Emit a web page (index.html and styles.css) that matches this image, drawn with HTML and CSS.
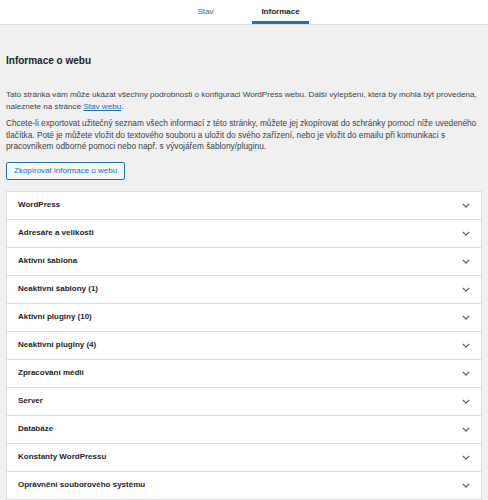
FILE: index.html
```html
<!DOCTYPE html>
<html lang="cs">
<head>
<meta charset="utf-8">
<link rel="stylesheet" href="styles.css">
</head>
<body>
<header class="tabs">
  <a class="tab">Stav</a>
  <a class="tab active">Informace</a>
</header>
<main class="content">
  <h2 class="title">Informace o webu</h2>
  <p class="text text-intro">Tato stránka vám může ukázat všechny podrobnosti o konfiguraci WordPress webu. Další vylepšení, která by mohla být provedena, naleznete na stránce <a class="link">Stav webu</a>.</p>
  <p class="text">Chcete-li exportovat užitečný seznam všech informací z této stránky, můžete jej zkopírovat do schránky pomocí níže uvedeného tlačítka. Poté je můžete vložit do textového souboru a uložit do svého zařízení, nebo je vložit do emailu při komunikaci s pracovníkem odborné pomoci nebo např. s vývojářem šablony/pluginu.</p>
  <div class="actions"><button class="btn">Zkopírovat informace o webu</button></div>
  <div class="accordion">
    <div class="row"><span>WordPress</span><svg class="chev" viewBox="0 0 10 6"><path d="M1 1l4 4 4-4"/></svg></div>
    <div class="row"><span>Adresáře a velikosti</span><svg class="chev" viewBox="0 0 10 6"><path d="M1 1l4 4 4-4"/></svg></div>
    <div class="row"><span>Aktivní šablona</span><svg class="chev" viewBox="0 0 10 6"><path d="M1 1l4 4 4-4"/></svg></div>
    <div class="row"><span>Neaktivní šablony (1)</span><svg class="chev" viewBox="0 0 10 6"><path d="M1 1l4 4 4-4"/></svg></div>
    <div class="row"><span>Aktivní pluginy (10)</span><svg class="chev" viewBox="0 0 10 6"><path d="M1 1l4 4 4-4"/></svg></div>
    <div class="row"><span>Neaktivní pluginy (4)</span><svg class="chev" viewBox="0 0 10 6"><path d="M1 1l4 4 4-4"/></svg></div>
    <div class="row"><span>Zpracování médií</span><svg class="chev" viewBox="0 0 10 6"><path d="M1 1l4 4 4-4"/></svg></div>
    <div class="row"><span>Server</span><svg class="chev" viewBox="0 0 10 6"><path d="M1 1l4 4 4-4"/></svg></div>
    <div class="row"><span>Databáze</span><svg class="chev" viewBox="0 0 10 6"><path d="M1 1l4 4 4-4"/></svg></div>
    <div class="row"><span>Konstanty WordPressu</span><svg class="chev" viewBox="0 0 10 6"><path d="M1 1l4 4 4-4"/></svg></div>
    <div class="row"><span>Oprávnění souborového systému</span><svg class="chev" viewBox="0 0 10 6"><path d="M1 1l4 4 4-4"/></svg></div>
  </div>
</main>
</body>
</html>
```
FILE: styles.css
```css
* { box-sizing: border-box; }
html, body { margin: 0; padding: 0; }
body {
  background: #f0f0f1;
  color: #1d2327;
  font-family: "Liberation Sans", Arial, sans-serif;
  font-size: 8px;
  line-height: 11.5px;
}
.tabs {
  background: #fff;
  height: 25px;
  border-bottom: 1px solid #dcdcde;
  display: flex;
  justify-content: center;
  gap: 29px;
  padding-left: 9px;
}
.tab {
  display: flex;
  align-items: center;
  height: 24px;
  padding: 2px 9.5px 0;
  font-size: 8px;
  color: #50575e;
  border-bottom: 3px solid transparent;
}
.tab.active {
  color: #1d2327;
  font-weight: 600;
  border-bottom-color: #2271b1;
}
.content {
  padding: 0 6px;
}
.title {
  margin: 0;
  padding-top: 29px;
  font-size: 10px;
  line-height: 14px;
  font-weight: 600;
  color: #1d2327;
}
.text {
  margin: 21px 0 0;
  font-size: 8.3px;
  line-height: 11.5px;
  color: #3c434a;
}
.text-intro { font-size: 8.1px; }
.text + .text { margin-top: 6px; }
.link { color: #2271b1; text-decoration: underline; }
.actions { margin-top: 9px; display: flex; }
.btn {
  font-family: inherit;
  font-size: 8px;
  color: #2271b1;
  background: #f6f7f7;
  border: 1px solid #2271b1;
  border-radius: 2px;
  height: 18px;
  padding: 0 7px;
  line-height: 16px;
  cursor: pointer;
}
.accordion {
  margin-top: 11px;
  background: #fff;
  border: 1px solid #dcdcde;
  border-bottom: 0;
}
.row {
  height: 28px;
  border-bottom: 1px solid #dcdcde;
  display: flex;
  align-items: center;
  justify-content: space-between;
  padding: 0 11px 0 11px;
  font-weight: 600;
}
.chev {
  width: 8px;
  height: 5px;
  fill: none;
  stroke: #50575e;
  stroke-width: 1.4;
}
```
